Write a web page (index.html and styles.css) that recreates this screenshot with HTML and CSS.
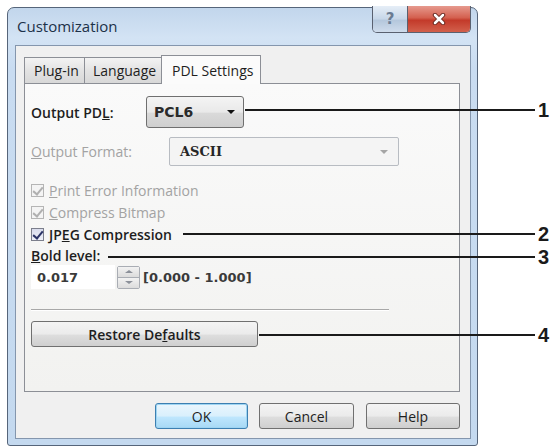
FILE: index.html
```html
<!DOCTYPE html>
<html lang="en">

<head>
    <meta charset="UTF-8">
    <meta name="viewport" content="width=device-width, initial-scale=1.0">
    <title>Customization</title>
    <link rel="stylesheet" href="styles.css">
</head>

<body>
    <div class="page">
        <div class="window">
            <div class="titlebar">
                <span class="title">Customization</span>
                <div class="caption-btns">
                    <div class="cap cap-help">?</div>
                    <div class="cap cap-close">
                        <svg width="14" height="12" viewBox="0 0 14 12">
                            <path d="M3 2 L11 10 M11 2 L3 10" stroke="#6a2a22" stroke-width="4.5" stroke-linecap="round" />
                            <path d="M3 2 L11 10 M11 2 L3 10" stroke="#fff" stroke-width="2.5" stroke-linecap="round" />
                        </svg>
                    </div>
                </div>
            </div>

            <div class="client">
                <div class="tabs">
                    <div class="tab">Plug-in</div>
                    <div class="tab">Language</div>
                    <div class="tab active">PDL Settings</div>
                </div>

                <div class="panel">
                    <div class="row row-pdl">
                        <span class="lbl lbl-pdl">Output PD<u>L</u>:</span>
                        <div class="dropdown">
                            <span>PCL6</span>
                            <span class="arrow"></span>
                        </div>
                    </div>

                    <div class="row row-format">
                        <span class="lbl lbl-format off"><u>O</u>utput Format:</span>
                        <div class="combo">
                            <span>ASCII</span>
                            <span class="arrow grey"></span>
                        </div>
                    </div>

                    <div class="checks">
                        <div class="check off"><span class="box"></span><span><u>P</u>rint Error Information</span></div>
                        <div class="check off"><span class="box"></span><span><u>C</u>ompress Bitmap</span></div>
                        <div class="check"><span class="box"></span><span class="strong">JP<u>E</u>G Compression</span></div>
                    </div>

                    <div class="bold-label strong"><u>B</u>old level:</div>
                    <div class="spin-row">
                        <div class="spin-input">0.017</div>
                        <div class="spin">
                            <span class="up"></span>
                            <span class="down"></span>
                        </div>
                        <span class="range">[0.000 - 1.000]</span>
                    </div>

                    <div class="separator"></div>

                    <div class="btn btn-restore">Restore De<u>f</u>aults</div>
                </div>

                <div class="buttons">
                    <div class="btn btn-ok">OK</div>
                    <div class="btn btn-cancel">Cancel</div>
                    <div class="btn btn-help">Help</div>
                </div>
            </div>
        </div>

        <!-- callout lines drawn over the dialog -->
        <div class="callout c1"><span class="line"></span><span class="num">1</span></div>
        <div class="callout c2"><span class="line"></span><span class="num">2</span></div>
        <div class="callout c3"><span class="line"></span><span class="num">3</span></div>
        <div class="callout c4"><span class="line"></span><span class="num">4</span></div>
    </div>
</body>

</html>
```

FILE: styles.css
```css
* {
    box-sizing: border-box;
}

body {
    margin: 0;
    background: #ffffff;
    font-family: "Open Sans", "Noto Sans", sans-serif;
    font-size: 14px;
    color: #1e1e1e;
}

.page {
    position: relative;
    width: 557px;
    height: 448px;
    overflow: hidden;
}

/* window frame */
.window {
    margin: 7px 0 0 7px;
    width: 471px;
    height: 439px;
    border: 1px solid #56657a;
    border-radius: 7px 7px 3px 3px;
    background: linear-gradient(180deg, #c2d6ec 0px, #d3e3f4 30px, #c9dcf1 60px, #c4d9ef 100%);
    padding: 0 6px 6px 7px;
    display: flex;
    flex-direction: column;
}

.titlebar {
    height: 37px;
    display: flex;
    align-items: flex-start;
    padding-left: 2px;
}

.title {
    font-size: 15px;
    color: #1c3148;
    padding-top: 8px;
}

.caption-btns {
    margin-left: auto;
    margin-top: -2px;
    display: flex;
    border: 1px solid #5a6170;
    border-top: none;
    border-radius: 0 0 5px 5px;
    overflow: hidden;
}

.cap {
    height: 26px;
    display: flex;
    align-items: center;
    justify-content: center;
}

.cap-help {
    width: 35px;
    background: linear-gradient(180deg, #e6eef7, #c6d6e8 50%, #b4c7dc 55%, #cfdcec);
    border-right: 1px solid #5a6170;
    color: #6a7b92;
    font-weight: bold;
    font-size: 15px;
    font-family: "DejaVu Sans", sans-serif;
}

.cap-close {
    width: 62px;
    background: linear-gradient(180deg, #e69a8e, #d4604f 45%, #c33a2a 55%, #d2604c);
}

/* client area */
.client {
    flex: 1;
    background: #f0f0f0;
    border: 1px solid #8496ad;
    padding: 9px 10px 0 8px;
    display: flex;
    flex-direction: column;
}

.tabs {
    height: 28px;
    display: flex;
    align-items: flex-end;
}

.tab {
    height: 26px;
    padding: 0 0 0 8px;
    border: 1px solid #8c8f96;
    border-bottom: none;
    margin-right: -1px;
    background: linear-gradient(180deg, #f3f3f3, #e3e3e3 50%, #d8d8d8);
    display: flex;
    align-items: center;
    font-size: 14px;
    color: #1e1e1e;
    white-space: nowrap;
    overflow: hidden;
}

.tab:first-child {
    width: 61px;
    padding-left: 9px;
}

.tab:nth-child(2) {
    width: 78px;
}

.tab.active {
    width: 100px;
    height: 29px;
    margin-bottom: -1px;
    background: #fbfbfb;
    position: relative;
    z-index: 1;
    padding-left: 10px;
}

.panel {
    height: 309px;
    border: 1px solid #8c8f96;
    background: linear-gradient(180deg, #fafafa, #f2f2f0);
    padding: 12px 0 0 6px;
}

.row {
    display: flex;
    align-items: center;
}

.row-pdl {
    height: 32px;
}

.row-format {
    height: 29px;
    margin-top: 9px;
}

.lbl-pdl {
    width: 115px;
    font-weight: 600;
}

.lbl-format {
    width: 138px;
}

.off {
    color: #a3a3a3;
}

.strong {
    font-weight: 600;
}

.dropdown {
    width: 98px;
    height: 32px;
    border: 1px solid #6f6f6f;
    border-radius: 3px;
    background: linear-gradient(180deg, #f4f4f4, #e9e9e9 50%, #d9d9d9 55%, #cfcfcf);
    display: flex;
    align-items: center;
    padding: 0 8px 0 7px;
    font-family: "DejaVu Sans", sans-serif;
    font-weight: bold;
    font-size: 14px;
    color: #2a2a2a;
}

.arrow {
    margin-left: auto;
    width: 0;
    height: 0;
    border-left: 4px solid transparent;
    border-right: 4px solid transparent;
    border-top: 4px solid #111;
}

.arrow.grey {
    border-top-color: #a5a5a5;
    margin-right: 2px;
}

.combo {
    width: 230px;
    height: 29px;
    border: 1px solid #b8bcc2;
    border-radius: 2px;
    background: #f4f4f4;
    display: flex;
    align-items: center;
    padding: 0 8px 0 10px;
    font-family: "DejaVu Serif", serif;
    font-weight: bold;
    font-size: 13px;
    color: #262626;
}

.checks {
    margin-top: 13px;
}

.check {
    height: 22px;
    display: flex;
    align-items: center;
    gap: 5px;
}

.box {
    width: 13px;
    height: 13px;
    border: 1px solid #b5b5b5;
    background: #f4f4f4;
    position: relative;
}

.box::after {
    content: "";
    position: absolute;
    left: 3px;
    top: 0px;
    width: 4px;
    height: 8px;
    border-right: 2px solid #b0b0b0;
    border-bottom: 2px solid #b0b0b0;
    transform: rotate(40deg);
}

.check:not(.off) .box {
    border-color: #7c7f8c;
    background: linear-gradient(180deg, #d9dcec, #eef0f8);
}

.check:not(.off) .box::after {
    border-color: #2b3366;
}

.bold-label {
    height: 20px;
    display: flex;
    align-items: center;
}

.spin-row {
    height: 24px;
    display: flex;
    align-items: center;
}

.spin-input {
    width: 84px;
    height: 24px;
    background: #ffffff;
    display: flex;
    align-items: center;
    padding-left: 6px;
    font-family: "DejaVu Sans", sans-serif;
    font-weight: bold;
    font-size: 13px;
    color: #3a3a3a;
}

.spin {
    width: 23px;
    height: 23px;
    margin-left: 2px;
    display: flex;
    flex-direction: column;
    border: 1px solid #a9adb4;
    border-radius: 2px;
}

.spin span {
    flex: 1;
    background: linear-gradient(180deg, #f2f2f2, #dcdcdc);
    display: flex;
    align-items: center;
    justify-content: center;
}

.spin .up {
    border-bottom: 1px solid #a9adb4;
}

.spin .up::after,
.spin .down::after {
    content: "";
    border-left: 4px solid transparent;
    border-right: 4px solid transparent;
}

.spin .up::after {
    border-bottom: 3px solid #8b9099;
}

.spin .down::after {
    border-top: 3px solid #8b9099;
}

.range {
    margin-left: 3px;
    font-family: "DejaVu Sans", sans-serif;
    font-weight: bold;
    font-size: 13px;
    color: #3a3a3a;
}

.separator {
    margin-top: 20px;
    width: 358px;
    height: 2px;
    border-top: 1px solid #a8a8a8;
    border-bottom: 1px solid #ffffff;
}

.btn {
    height: 26px;
    border: 1px solid #707070;
    border-radius: 3px;
    background: linear-gradient(180deg, #f4f4f4, #ebebeb 50%, #dddddd 55%, #cfcfcf);
    display: flex;
    align-items: center;
    justify-content: center;
    font-size: 14px;
}

.btn-restore {
    margin-top: 10px;
    width: 227px;
    font-weight: 600;
}

.buttons {
    margin-top: 11px;
    display: flex;
    justify-content: flex-end;
}

.btn-ok {
    width: 93px;
    border-color: #3c7fb1;
    box-shadow: inset 0 0 0 1px #9fd5f2;
    background: linear-gradient(180deg, #eaf6fd, #d9f0fc 50%, #bee6fd 55%, #a7d9f5);
}

.btn-cancel {
    width: 95px;
    margin-left: 11px;
}

.btn-help {
    width: 94px;
    margin-left: 12px;
}

/* callouts */
.callout {
    position: absolute;
    height: 22px;
    display: flex;
    align-items: center;
}

.callout .line {
    flex: 1;
    height: 2px;
    background: #1a1a1a;
}

.callout .num {
    width: 20px;
    padding-left: 3px;
    font-family: "Liberation Sans", Arial, sans-serif;
    font-weight: bold;
    font-size: 20px;
    color: #1a1a1a;
}

.c1 {
    top: 99px;
    left: 245px;
    width: 310px;
}

.c2 {
    top: 223px;
    left: 183px;
    width: 372px;
}

.c3 {
    top: 246px;
    left: 108px;
    width: 447px;
}

.c4 {
    top: 324px;
    left: 259px;
    width: 296px;
}
```
